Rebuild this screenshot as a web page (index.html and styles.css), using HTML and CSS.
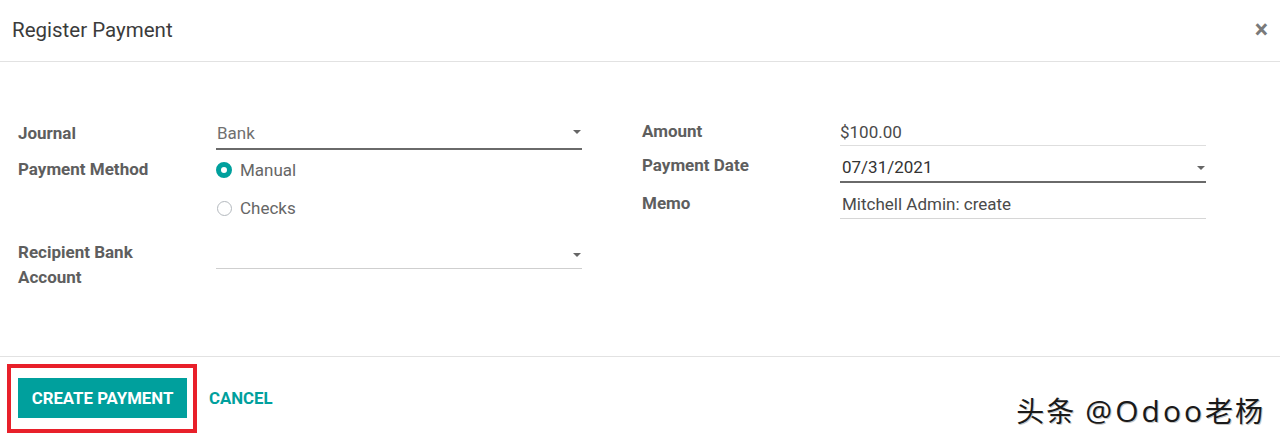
FILE: index.html
```html
<!DOCTYPE html>
<html lang="en">
<head>
<meta charset="utf-8">
<title>Register Payment</title>
<link rel="stylesheet" href="styles.css">
</head>
<body>
<div class="modal">
  <header class="modal-header">
    <h4 class="modal-title">Register Payment</h4>
    <span class="close">&times;</span>
  </header>
  <main class="modal-body">
    <div class="group group-left">
      <div class="label l-journal">Journal</div>
      <div class="field field-select field-strong f-journal"><span class="val val-muted">Bank</span><span class="caret"></span></div>

      <div class="label l-method">Payment Method</div>
      <div class="radios">
        <div class="radio"><span class="dot dot-on"></span><span class="radio-label">Manual</span></div>
        <div class="radio"><span class="dot"></span><span class="radio-label">Checks</span></div>
      </div>

      <div class="label l-recipient">Recipient Bank<br>Account</div>
      <div class="field field-select f-recipient"><span class="val"></span><span class="caret"></span></div>
    </div>

    <div class="group group-right">
      <div class="label l-amount">Amount</div>
      <div class="field f-amount"><span class="val">$100.00</span></div>

      <div class="label l-date">Payment Date</div>
      <div class="field field-select field-strong f-date"><span class="val val-dark">07/31/2021</span><span class="caret"></span></div>

      <div class="label l-memo">Memo</div>
      <div class="field f-memo"><span class="val">Mitchell Admin: create</span></div>
    </div>
  </main>
  <footer class="modal-footer">
    <button class="btn btn-primary">CREATE PAYMENT</button>
    <button class="btn btn-link">CANCEL</button>
    <div class="highlight"></div>
    <div class="watermark"><span class="wm-cjk">头条</span> <span class="wm-latin">@Odoo</span><span class="wm-cjk">老杨</span></div>
  </footer>
</div>
</body>
</html>
```

FILE: styles.css
```css
* { box-sizing: border-box; }

html, body {
  margin: 0;
  padding: 0;
  background: #ffffff;
}

body {
  font-family: Roboto, "Liberation Sans", "Noto Sans CJK SC", sans-serif;
  font-size: 17px;
  color: #4c4c4c;
  width: 1280px;
  height: 441px;
  overflow: hidden;
}

.modal {
  display: flex;
  flex-direction: column;
  height: 441px;
}

.modal-header {
  height: 62px;
  border-bottom: 1px solid #e2e2e2;
  display: flex;
  align-items: center;
  justify-content: space-between;
  padding: 0 12px 2px 12px;
}

.modal-title {
  margin: 0;
  font-size: 20.5px;
  font-weight: 400;
  color: #3b3b3b;
}

.close {
  font-size: 25px;
  font-weight: 700;
  color: #7a7a7a;
  line-height: 1;
}

.modal-body {
  height: 294px;
  padding: 54px 0 0 18px;
  display: flex;
  gap: 60px;
}

.group {
  display: grid;
  grid-template-columns: 198px 366px;
  align-content: start;
}

.label {
  font-weight: 700;
  color: #5e5e5e;
  font-size: 17px;
}

.field {
  position: relative;
  display: flex;
  align-items: center;
  border-bottom: 1px solid #d6d6d6;
}

.field-strong {
  border-bottom: 2px solid #6a6a6a;
}

.val {
  color: #4a4a4a;
  font-size: 17px;
}

.val-muted { color: #707070; padding-left: 1px; }
.val-dark { color: #333333; padding-left: 2px; }

.caret {
  position: absolute;
  right: 1px;
  top: 50%;
  margin-top: -2px;
  width: 0;
  height: 0;
  border-left: 4px solid transparent;
  border-right: 4px solid transparent;
  border-top: 4px solid #666;
}

/* left group rows */
.l-journal { line-height: 32px; padding-top: 1px; }
.f-journal { height: 34px; padding-top: 2px; }
.f-journal .caret { margin-top: -2px; }

.l-method { line-height: 38px; padding-top: 0px; }
.radios { padding-top: 1px; }
.radio {
  height: 38px;
  display: flex;
  align-items: center;
}
.dot {
  width: 15px;
  height: 15px;
  border-radius: 50%;
  border: 1px solid #b4b9be;
  margin-left: 1px;
  margin-right: 8px;
  background: #fff;
}
.dot-on {
  width: 16px;
  height: 16px;
  margin-left: 0;
  border: 5px solid #00a09d;
  background: #ffffff;
}
.radio-label { color: #666666; }

.l-recipient {
  margin-top: 13px;
  line-height: 25px;
}
.f-recipient {
  margin-top: 13px;
  height: 29px;
  border-bottom-color: #cfcfcf;
}
.f-recipient .caret { margin-top: -1px; }

/* right group rows */
.group-right { row-gap: 4px; }
.l-amount { line-height: 29px; padding-top: 1px; }
.f-amount { height: 30px; padding-top: 3px; border-bottom-color: #dedede; }
.l-date { line-height: 31px; }
.f-date { height: 33px; padding-top: 3px; }
.f-date .caret { margin-top: 0px; }
.l-memo { line-height: 32px; }
.f-memo { height: 32px; padding-top: 3px; }
.f-memo .val { padding-left: 2px; }

/* footer */
.modal-footer {
  position: relative;
  flex: 1;
  border-top: 1px solid #e2e2e2;
  padding: 21px 0 0 18px;
  display: flex;
  align-items: flex-start;
  gap: 22px;
}

.btn {
  font-family: Roboto, "Liberation Sans", sans-serif;
  font-size: 16.8px;
  font-weight: 700;
  border: none;
  margin: 0;
  cursor: pointer;
  height: 40px;
  line-height: 40px;
}

.btn-primary {
  background: #00a09d;
  color: #ffffff;
  width: 169px;
  padding: 0;
  border-radius: 0;
}

.btn-link {
  background: transparent;
  color: #00a09d;
  padding: 0;
}

.highlight {
  position: absolute;
  left: 7px;
  top: 7px;
  width: 190px;
  height: 69px;
  border: 4px solid #e8202a;
  pointer-events: none;
}

.watermark {
  position: absolute;
  right: 15px;
  top: 35px;
  font-size: 28px;
  line-height: 36px;
  color: #1a1a1a;
  text-shadow: 1px 1px 0 #c8c8c8;
  white-space: nowrap;
  letter-spacing: 2px;
}

.wm-cjk {
  font-family: "Noto Sans CJK SC", sans-serif;
}

.wm-latin {
  font-family: "Open Sans", "Noto Sans", sans-serif;
  font-size: 30px;
  letter-spacing: 3px;
}
```
